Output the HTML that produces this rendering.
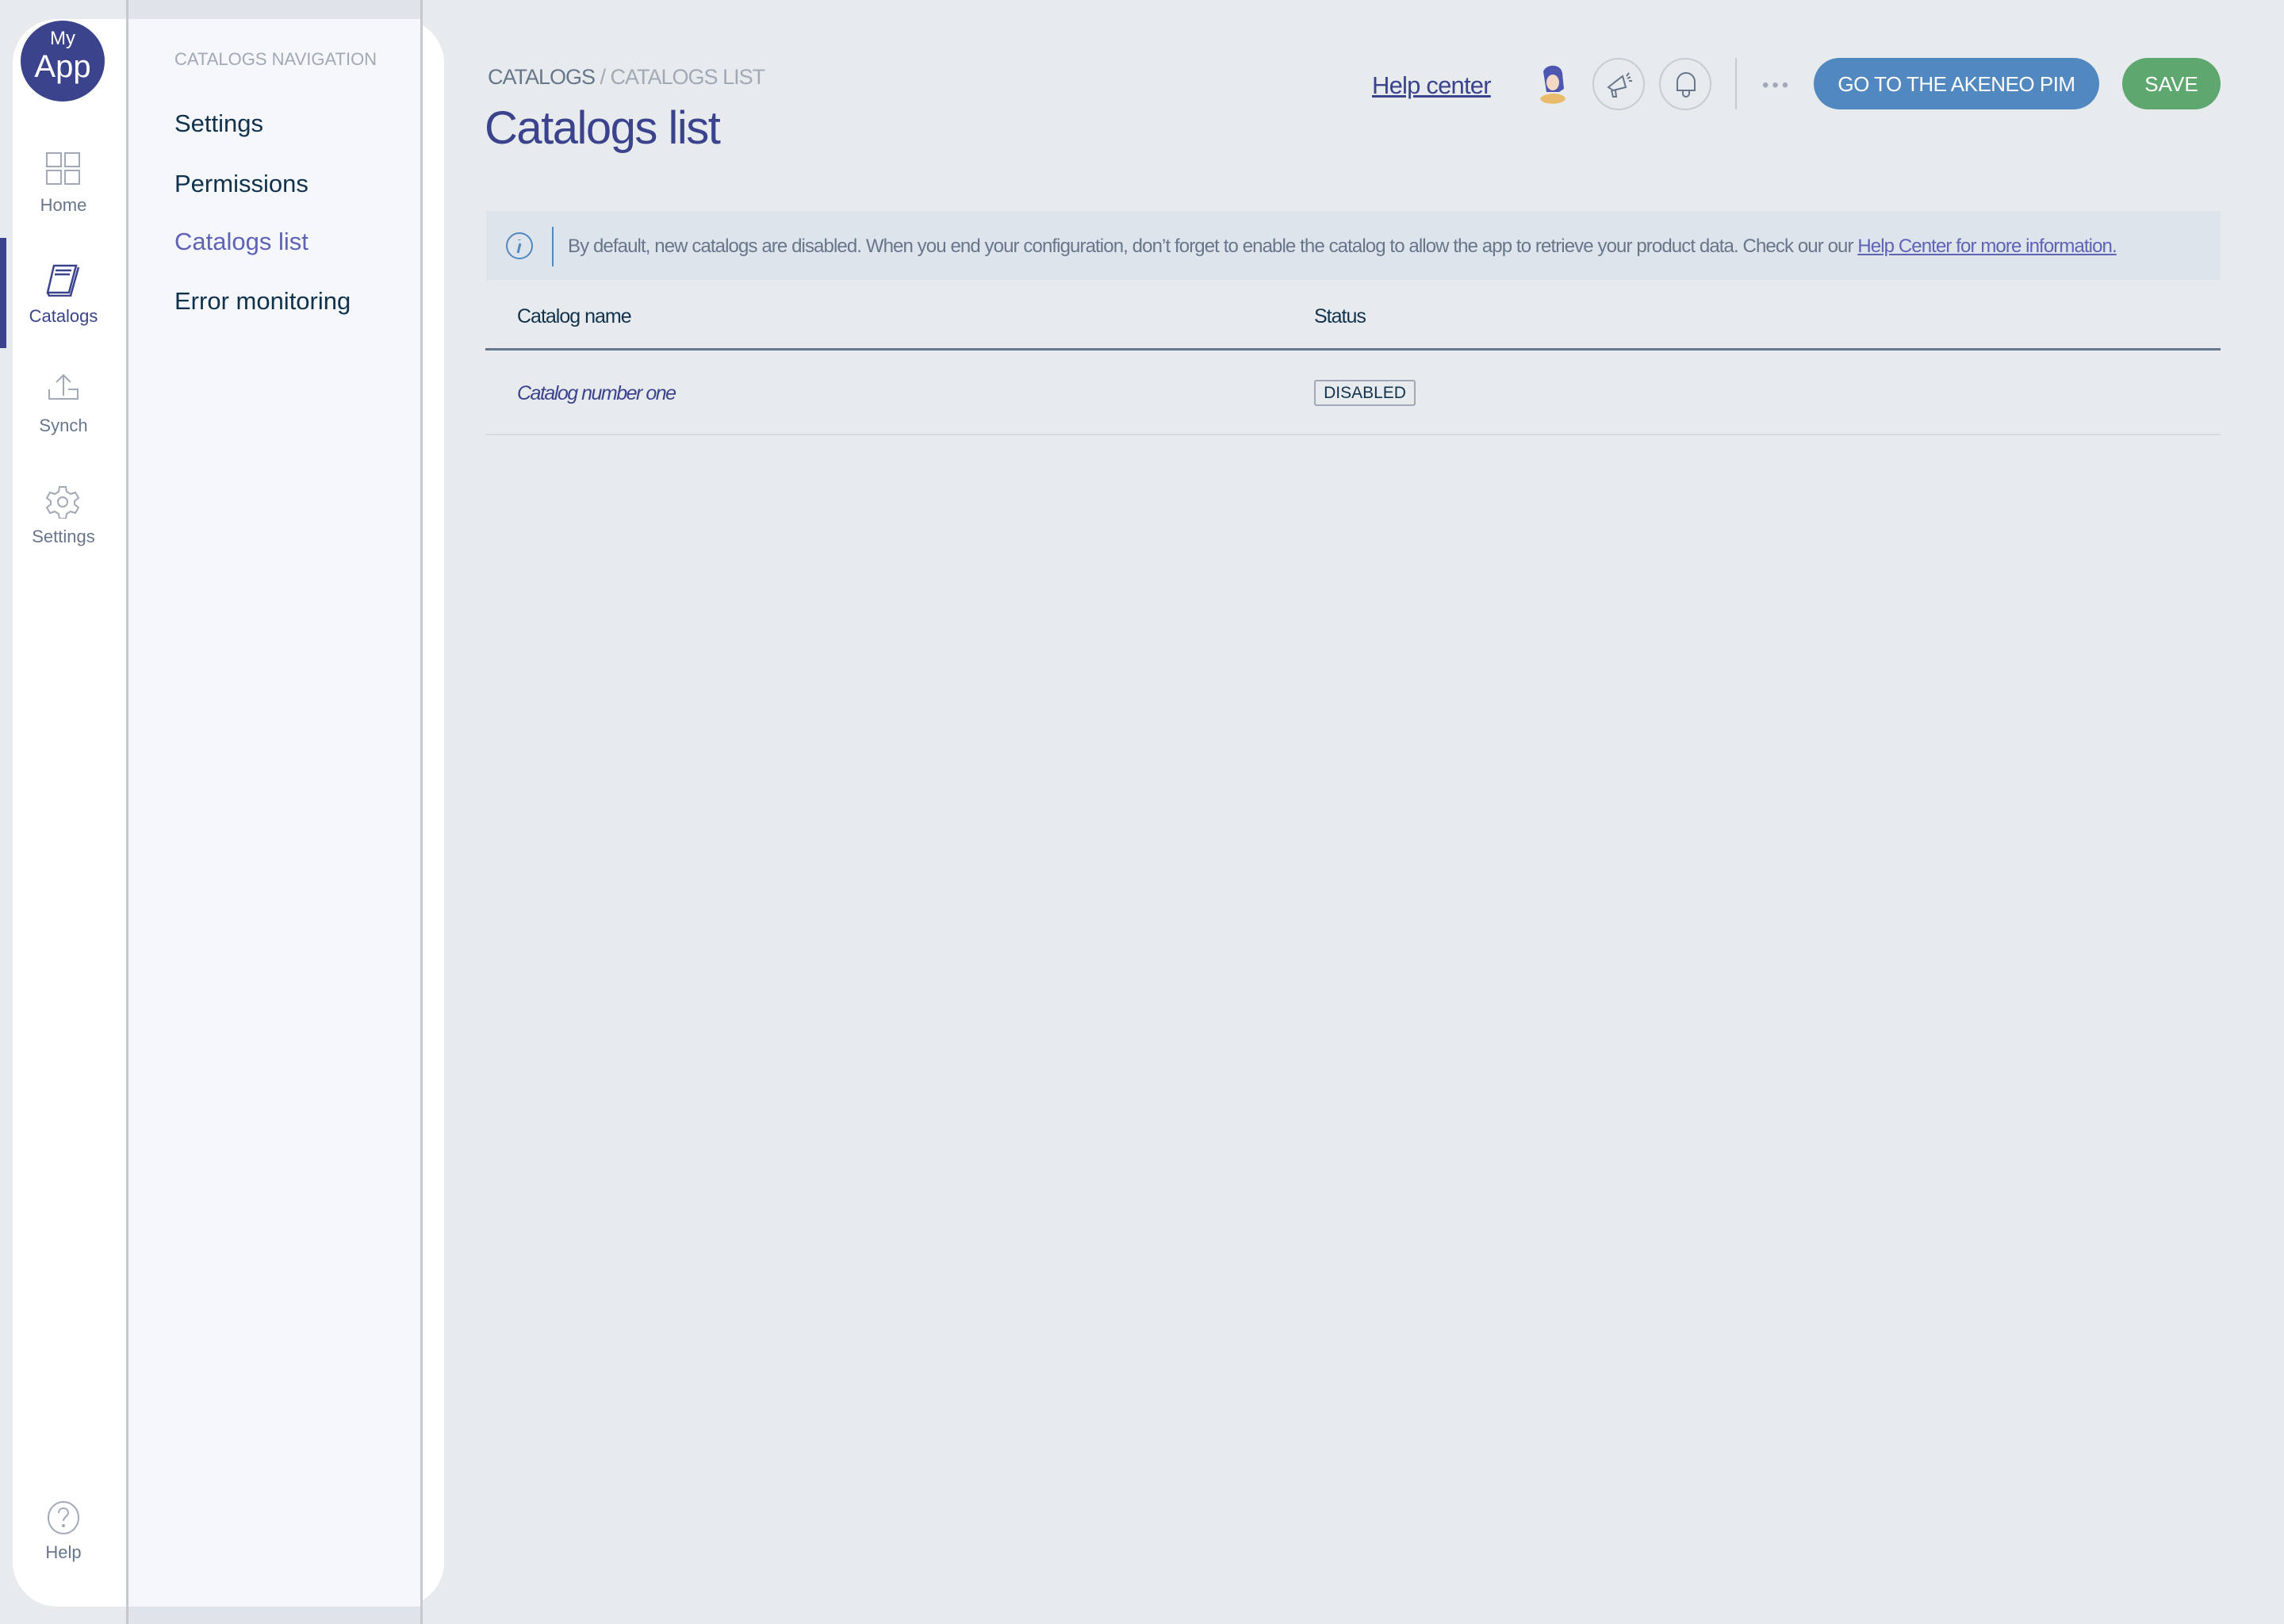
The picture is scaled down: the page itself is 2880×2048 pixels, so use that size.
<!DOCTYPE html>
<html><head><meta charset="utf-8"><style>
*{margin:0;padding:0;box-sizing:border-box}
body{width:2880px;height:2048px;background:#e8ebee;font-family:"Liberation Sans",sans-serif;position:relative;overflow:hidden}
.a{position:absolute;white-space:nowrap}
.vl{position:absolute;top:0;height:2048px;width:3px;background:#c4c9d1}
.rail{position:absolute;left:16px;top:24px;width:544px;height:2002px;background:#fff;border-radius:56px}
.navbg{position:absolute;left:160px;top:0;width:371px;height:2048px;background:#dfe3ea}
.nav{position:absolute;left:160px;top:24px;width:371px;height:2002px;background:#f5f7fb}
.lbl{position:absolute;width:160px;left:0;text-align:center;font-size:22px;color:#67768a}
.ni{position:absolute;left:220px;font-size:31px;color:#11324d}
.circ{position:absolute;width:66px;height:66px;border:2px solid #c7ccd4;border-radius:50%}
</style></head><body>
<div class="navbg"></div>
<div class="rail"></div>
<div class="nav"></div>
<div class="vl" style="left:159px"></div>
<div class="vl" style="left:530px"></div>
<div class="a" style="left:0;top:300px;width:8px;height:139px;background:#3b438c"></div>
<div class="a" style="left:26px;top:26px;width:106px;height:102px;border-radius:50%;background:#3b438c"></div>
<div class="a" style="left:26px;top:36px;width:106px;text-align:center;color:#fff;font-size:24px;line-height:26px">My</div>
<div class="a" style="left:26px;top:64px;width:106px;text-align:center;color:#fff;font-size:40px;line-height:40px">App</div>
<svg class="a" style="left:58px;top:192px" width="44" height="42" viewBox="0 0 44 42" fill="none" stroke="#a1a9b7" stroke-width="2"><rect x="1" y="1" width="18" height="17"/><rect x="24" y="1" width="18" height="17"/><rect x="1" y="23" width="18" height="17"/><rect x="24" y="23" width="18" height="17"/></svg>
<div class="lbl" style="top:246px">Home</div>
<svg class="a" style="left:58px;top:332px" width="44" height="42" viewBox="0 0 44 42" fill="none" stroke="#3b438c" stroke-width="2.5"><path d="M10 3h28l-9 34H2zM2 37l2 4h27l10-36M12 9h20M11 14h19"/></svg>
<div class="lbl" style="top:386px;color:#3b438c">Catalogs</div>
<svg class="a" style="left:60px;top:471px" width="40" height="34" viewBox="0 0 40 34" fill="none" stroke="#a1a9b7" stroke-width="2"><path d="M20 28V2M11 11l9-9 9 9M2 20v12h36V20h-12"/></svg>
<div class="lbl" style="top:524px">Synch</div>
<svg class="a" style="left:58px;top:612px" width="42" height="42" viewBox="0 0 42 42" fill="none" stroke="#a1a9b7" stroke-width="2"><circle cx="21" cy="21" r="6"/><path d="M17 2h8l1 6 5 3 6-2 4 7-5 4v4l5 4-4 7-6-2-5 3-1 6h-8l-1-6-5-3-6 2-4-7 5-4v-4l-5-4 4-7 6 2 5-3z"/></svg>
<div class="lbl" style="top:664px">Settings</div>
<svg class="a" style="left:59px;top:1893px" width="42" height="42" viewBox="0 0 42 42" fill="none" stroke="#a1a9b7" stroke-width="2"><ellipse cx="21" cy="21" rx="19" ry="20"/><path d="M15 15c0-4 3-6 6-6s6 2 6 6c0 4-6 5-6 10"/><circle cx="21" cy="31" r="1" fill="#a1a9b7"/></svg>
<div class="lbl" style="top:1945px">Help</div>
<div class="a" style="left:220px;top:62px;font-size:22px;color:#a1a9b7">CATALOGS NAVIGATION</div>
<div class="ni" style="top:138px">Settings</div>
<div class="ni" style="top:214px">Permissions</div>
<div class="ni" style="top:287px;color:#5e63b6">Catalogs list</div>
<div class="ni" style="top:362px">Error monitoring</div>

<div class="a" style="left:615px;top:82px;font-size:27px;color:#67768a;letter-spacing:-1px">CATALOGS <span style="color:#a1a9b7">/ CATALOGS LIST</span></div>
<div class="a" style="left:611px;top:128px;font-size:58px;color:#3b438c;letter-spacing:-1.5px">Catalogs list</div>
<div class="a" style="left:1730px;top:90px;font-size:31px;color:#3b438c;text-decoration:underline;letter-spacing:-0.8px">Help center</div>
<svg class="a" style="left:1938px;top:80px" width="44" height="54" viewBox="0 0 44 54"><path d="M8 10c4-10 22-10 24 2l2 20-6 4H12z" fill="#4d56b0"/><ellipse cx="20" cy="24" rx="8" ry="10" fill="#f3d9c4"/><path d="M4 44c6-8 28-8 32 0c0 8-30 10-32 0z" fill="#e9bb6a"/></svg>
<div class="circ" style="left:2008px;top:73px"></div>
<svg class="a" style="left:2024px;top:88px" width="36" height="36" viewBox="0 0 36 36" fill="none" stroke="#67768a" stroke-width="2"><path d="M4 22l18-14 4 14-16 4zM8 26l2 8h4l-1-8M27 8l3-4M30 14h4M28 11l4-2"/></svg>
<div class="circ" style="left:2092px;top:73px"></div>
<svg class="a" style="left:2111px;top:88px" width="30" height="36" viewBox="0 0 30 36" fill="none" stroke="#67768a" stroke-width="2"><path d="M4 26V15a11 11 0 0 1 22 0v11H4zM11 26v4a4 4 0 0 0 8 0v-4"/></svg>
<div class="a" style="left:2188px;top:73px;width:2px;height:65px;background:#c7ccd4"></div>
<div class="a" style="left:2222px;top:94px;font-size:24px;color:#a1a9b7;letter-spacing:4px">•••</div>
<div class="a" style="left:2287px;top:73px;width:360px;height:65px;border-radius:33px;background:#5288c0;color:#fff;font-size:26px;text-align:center;line-height:67px;letter-spacing:-0.5px">GO TO THE AKENEO PIM</div>
<div class="a" style="left:2676px;top:73px;width:124px;height:65px;border-radius:33px;background:#5ea76f;color:#fff;font-size:26px;text-align:center;line-height:67px">SAVE</div>

<div class="a" style="left:613px;top:266px;width:2187px;height:87px;background:#dee4ec"></div>
<svg class="a" style="left:637px;top:292px" width="36" height="36" viewBox="0 0 36 36" fill="none" stroke="#5288c0" stroke-width="2"><circle cx="18" cy="18" r="16"/><path d="M19 15l-3 12M18 10v1" stroke-width="3"/></svg>
<div class="a" style="left:696px;top:286px;width:2px;height:50px;background:#5288c0"></div>
<div class="a" style="left:716px;top:297px;font-size:24px;color:#67768a;letter-spacing:-0.9px">By default, new catalogs are disabled. When you end your configuration, don’t forget to enable the catalog to allow the app to retrieve your product data. Check our our <span style="color:#5e63b6;text-decoration:underline">Help Center for more information.</span></div>
<div class="a" style="left:652px;top:385px;font-size:25px;color:#11324d;letter-spacing:-1px">Catalog name</div>
<div class="a" style="left:1657px;top:385px;font-size:25px;color:#11324d;letter-spacing:-1px">Status</div>
<div class="a" style="left:612px;top:439px;width:2188px;height:3px;background:#67768a"></div>
<div class="a" style="left:652px;top:482px;font-size:25px;color:#3b438c;font-style:italic;letter-spacing:-1.5px">Catalog number one</div>
<div class="a" style="left:1657px;top:479px;width:128px;height:33px;border:2px solid #a1a9b7;border-radius:3px;font-size:21px;color:#11324d;text-align:center;line-height:29px">DISABLED</div>
<div class="a" style="left:612px;top:547px;width:2188px;height:2px;background:#d8dce2"></div>
</body></html>
